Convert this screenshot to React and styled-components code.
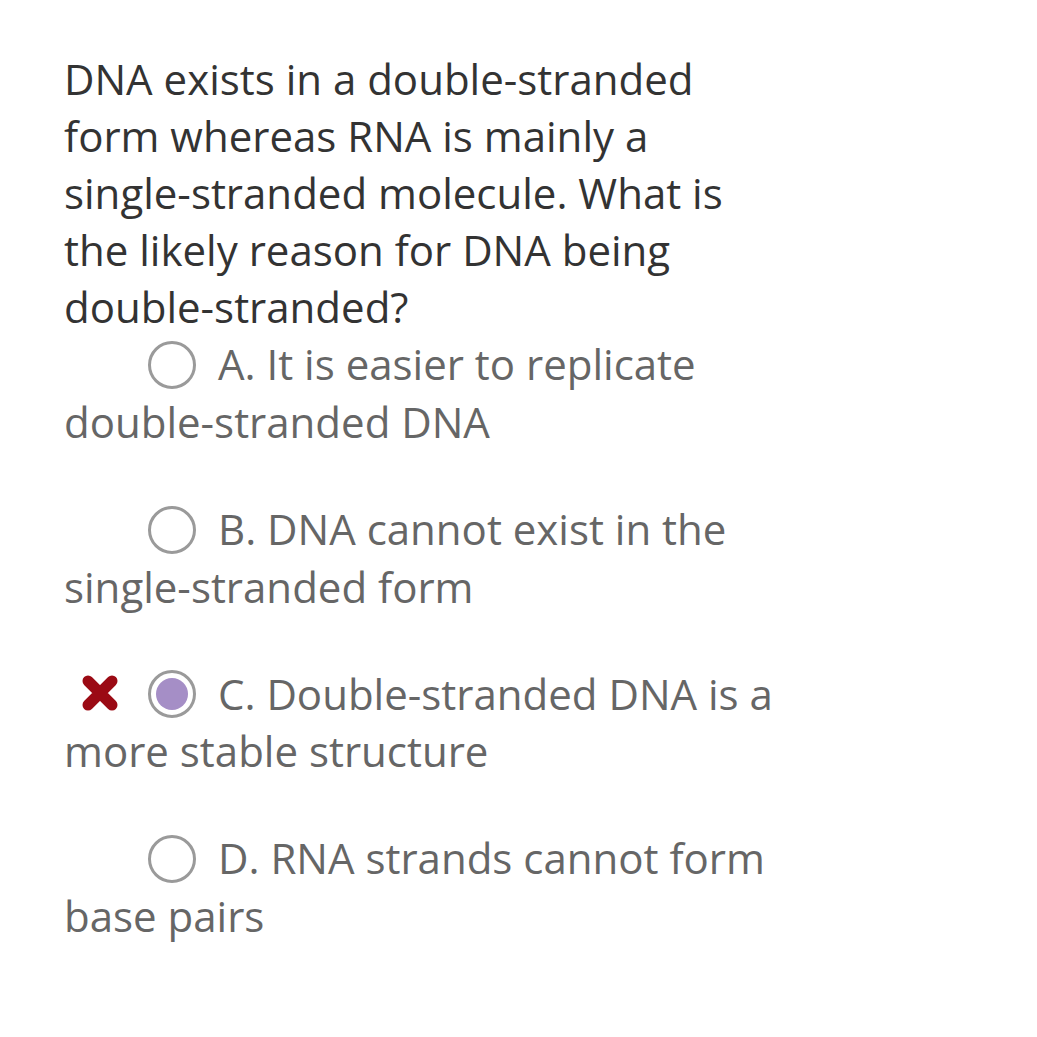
import React from "react";
import styled, { createGlobalStyle } from "styled-components";

const GlobalStyle = createGlobalStyle`
  body {
    margin: 0;
    background: #ffffff;
    font-family: "Open Sans", "Liberation Sans", sans-serif;
  }
`;

const Page = styled.div`
  padding: 50px 0 0 64px;
  width: 717px;
  font-size: 42px;
  line-height: 57px;
`;

const Question = styled.div`
  color: #333333;
`;

const Option = styled.div`
  color: #666666;
  margin-bottom: 50px;
`;

const Mark = styled.span`
  display: inline-block;
  width: 84px;
  height: 40px;
  vertical-align: middle;
  position: relative;
  top: -4px;

  svg {
    display: block;
    margin-left: 17px;
  }
`;

const Radio = styled.span`
  display: inline-block;
  box-sizing: border-box;
  width: 48px;
  height: 48px;
  border-radius: 50%;
  border: 3px solid #9a9a9a;
  vertical-align: middle;
  position: relative;
  top: -4px;
  margin-right: 22px;

  &::after {
    content: "";
    position: absolute;
    left: 5px;
    top: 5px;
    width: 32px;
    height: 32px;
    border-radius: 50%;
    background: ${(p) => (p.$checked ? "#a58ec6" : "transparent")};
  }
`;

const Cross = () => (
  <svg width="38" height="38" viewBox="0 0 38 38">
    <path
      d="M7 7 L31 31 M31 7 L7 31"
      stroke="#9b0a14"
      strokeWidth="11"
      strokeLinecap="round"
    />
  </svg>
);

const options = [
  { label: "A. It is easier to replicate double-stranded DNA" },
  { label: "B. DNA cannot exist in the single-stranded form" },
  { label: "C. Double-stranded DNA is a more stable structure", checked: true, wrong: true },
  { label: "D. RNA strands cannot form base pairs" },
];

export default function App() {
  return (
    <>
      <GlobalStyle />
      <Page>
        <Question>
          DNA exists in a double-stranded form whereas RNA is mainly a
          single-stranded molecule. What is the likely reason for DNA being
          double-stranded?
        </Question>
        {options.map((o) => (
          <Option key={o.label}>
            <Mark>{o.wrong && <Cross />}</Mark>
            <Radio $checked={o.checked} />
            {o.label}
          </Option>
        ))}
      </Page>
    </>
  );
}
